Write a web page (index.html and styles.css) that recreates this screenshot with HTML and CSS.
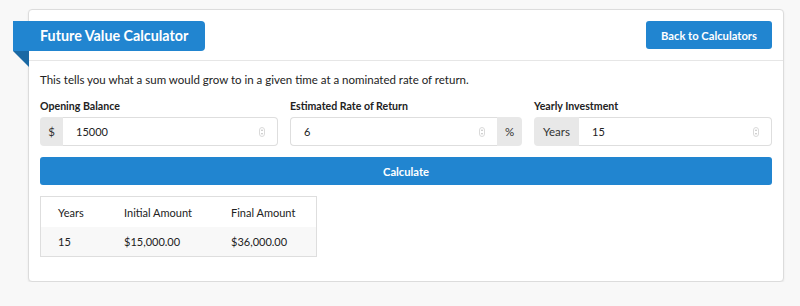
FILE: index.html
```html
<!DOCTYPE html>
<html lang="en">
<head>
    <meta charset="UTF-8">
    <title>Future Value Calculator</title>
    <link rel="stylesheet" href="styles.css">
</head>
<body>
    <div class="card">
        <!-- cabecalho -->
        <div class="card-header">
            <div class="ribbon">Future Value Calculator</div>
            <button class="btn btn-back">Back to Calculators</button>
        </div>
        <div class="card-body">
            <p class="intro">This tells you what a sum would grow to in a given time at a nominated rate of return.</p>
            <div class="fields">
                <div class="field">
                    <label>Opening Balance</label>
                    <div class="input-group">
                        <span class="addon">$</span>
                        <span class="input">15000
                            <svg class="spin" viewBox="0 0 6 10"><rect x="0.5" y="0.5" width="5" height="9" rx="2.5"/><path d="M3 2.2 L4.2 3.8 H1.8 Z M3 7.8 L4.2 6.2 H1.8 Z"/></svg>
                        </span>
                    </div>
                </div>
                <div class="field">
                    <label>Estimated Rate of Return</label>
                    <div class="input-group">
                        <span class="input input-left">6
                            <svg class="spin" viewBox="0 0 6 10"><rect x="0.5" y="0.5" width="5" height="9" rx="2.5"/><path d="M3 2.2 L4.2 3.8 H1.8 Z M3 7.8 L4.2 6.2 H1.8 Z"/></svg>
                        </span>
                        <span class="addon addon-right">%</span>
                    </div>
                </div>
                <div class="field">
                    <label>Yearly Investment</label>
                    <div class="input-group">
                        <span class="addon addon-years">Years</span>
                        <span class="input">15
                            <svg class="spin" viewBox="0 0 6 10"><rect x="0.5" y="0.5" width="5" height="9" rx="2.5"/><path d="M3 2.2 L4.2 3.8 H1.8 Z M3 7.8 L4.2 6.2 H1.8 Z"/></svg>
                        </span>
                    </div>
                </div>
            </div>
            <button class="btn btn-calc">Calculate</button>
            <table class="results">
                <thead>
                    <tr><th>Years</th><th>Initial Amount</th><th>Final Amount</th></tr>
                </thead>
                <tbody>
                    <tr><td>15</td><td>$15,000.00</td><td>$36,000.00</td></tr>
                </tbody>
            </table>
        </div>
    </div>
</body>
</html>
```

FILE: styles.css
```css
/* pagina */
body {
    margin: 0;
    background: #f8f8f8;
    font-family: Lato, "Open Sans", sans-serif;
    color: #222;
    padding: 9px 16px 0 28px;
}

.card {
    width: 754px;
    background: #fff;
    border: 1px solid #dcdcdc;
    border-radius: 4px;
    box-shadow: 0 1px 2px rgba(0, 0, 0, 0.08);
}

.card-header {
    height: 51px;
    border-bottom: 1px solid #e6e6e6;
    display: flex;
    align-items: flex-start;
    justify-content: space-between;
    padding: 11px 11px 0 0;
    box-sizing: border-box;
}

.ribbon {
    position: relative;
    margin-left: -16px;
    background: #2185d0;
    color: #fff;
    font-weight: 700;
    font-size: 14.3px;
    height: 30px;
    line-height: 30px;
    padding: 0 0 0 27px;
    width: 192px;
    box-sizing: border-box;
    white-space: nowrap;
    border-radius: 0 4px 4px 0;
}

/* dobra da fita */
.ribbon::after {
    content: "";
    position: absolute;
    left: 0;
    top: 100%;
    border-style: solid;
    border-width: 0 16px 16px 0;
    border-color: transparent #1a69a4 transparent transparent;
}

.btn {
    background: #2185d0;
    color: #fff;
    border: none;
    border-radius: 3px;
    font-family: inherit;
    font-weight: 700;
    font-size: 11.2px;
    cursor: pointer;
}

.btn-back {
    width: 126px;
    height: 28px;
}

.card-body {
    padding: 11px 11px 24px 11px;
}

.intro {
    margin: 0 0 11px 0;
    font-size: 11.5px;
    line-height: 16px;
}

.fields {
    display: grid;
    grid-template-columns: 238px 232px 238px;
    gap: 12px;
}

.field label {
    display: block;
    font-weight: 700;
    font-size: 10.6px;
    line-height: 14px;
    margin-bottom: 4px;
}

.input-group {
    display: flex;
    height: 29px;
    font-size: 11px;
}

.addon {
    background: #e8e8e8;
    border-radius: 4px 0 0 4px;
    width: 23px;
    display: flex;
    align-items: center;
    justify-content: center;
    color: #333;
    font-size: 11.5px;
}

.addon-right {
    border-radius: 0 4px 4px 0;
    width: 25px;
}

.addon-years {
    width: 45px;
}

.input {
    flex: 1;
    position: relative;
    border: 1px solid #dedede;
    border-left: none;
    border-radius: 0 4px 4px 0;
    display: flex;
    align-items: center;
    padding-left: 13px;
}

.input-left {
    border-left: 1px solid #dedede;
    border-right: none;
    border-radius: 4px 0 0 4px;
}

/* setas do campo numerico */
.spin {
    position: absolute;
    right: 12px;
    top: 9px;
    width: 6px;
    height: 10px;
}

.spin rect {
    fill: none;
    stroke: #d0d0d0;
    stroke-width: 0.8;
}

.spin path {
    fill: #b8b8b8;
}

.btn-calc {
    display: block;
    width: 100%;
    height: 28px;
    margin-top: 11px;
}

.results {
    margin-top: 11px;
    width: 277px;
    table-layout: fixed;
    border-collapse: collapse;
    border: 1px solid #dedede;
    font-size: 11px;
    white-space: nowrap;
}

.results th {
    font-weight: 400;
    text-align: left;
    height: 30px;
    padding: 0 0 0 17px;
}

.results td {
    background: #f8f8f8;
    height: 29px;
    padding: 0 0 0 17px;
}

.results th:first-child {
    width: 49px;
}

.results th:nth-child(2) {
    width: 90px;
}
```
